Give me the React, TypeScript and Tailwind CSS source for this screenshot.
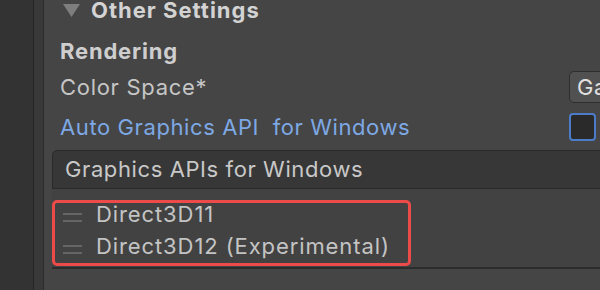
import React from "react";

const apis = ["Direct3D11", "Direct3D12 (Experimental)"];

function DragHandle() {
  return (
    <div className="ml-[11px] mt-[6px] flex w-[19px] shrink-0 flex-col gap-[5px]">
      <span className="h-[2px] bg-[#656565]" />
      <span className="h-[2px] bg-[#656565]" />
    </div>
  );
}

export default function App() {
  return (
    <div className="flex h-[290px] w-[600px] overflow-hidden bg-[#454545] font-['Inter','Noto_Sans',sans-serif] text-[22px] tracking-[0.7px] text-[#c6c6c6]">
      {/* side gutters */}
      <div className="w-[33px] shrink-0 bg-[#333333]" />
      <div className="w-[1px] shrink-0 bg-[#262626]" />
      <div className="w-[9px] shrink-0 bg-[#393939]" />
      <div className="w-[1px] shrink-0 bg-[#2b2b2b]" />

      <div className="flex min-w-0 flex-1 flex-col overflow-hidden">
        {/* foldout header */}
        <div className="flex h-[20px] items-center">
          <svg className="ml-[19px] shrink-0" width="17" height="13" viewBox="0 0 17 13">
            <path d="M0 0 H17 L8.5 13 Z" fill="#7e7e7e" />
          </svg>
          <span className="ml-[11px] text-[22px] font-bold leading-[25px] tracking-[1px] text-[#d3d3d3]">
            Other Settings
          </span>
        </div>

        <div className="mt-[16px] flex h-[31px] items-center pl-[16px]">
          <span className="font-bold leading-[25px] tracking-[0.8px] text-[#cecece]">Rendering</span>
        </div>

        <div className="mt-[4px] flex h-[32px] items-center pl-[16px]">
          <span className="leading-[25px]">Color Space*</span>
          <div className="ml-auto mr-[-19px] flex h-[32px] w-[50px] shrink-0 items-center rounded-[5px] border border-[#2e2e2e] bg-[#515151] pl-[7px] text-[#e0e0e0]">
            <span className="leading-[25px]">Ga</span>
          </div>
        </div>

        <div className="mt-[8px] flex h-[32px] items-center pl-[16px]">
          <span className="whitespace-pre leading-[25px] tracking-[0.6px] text-[#7ea8e4]">Auto Graphics API  for Windows</span>
          <div className="ml-auto mr-[4px] h-[28px] w-[27px] shrink-0 rounded-[4px] border-2 border-[#4a7cc8] bg-[#2a2a2a]" />
        </div>

        {/* reorderable list */}
        <div className="relative ml-[8px] mr-[-20px] mt-[7px]">
          <div className="flex h-[39px] items-center rounded-tl-[5px] border border-[#2a2a2a] bg-[#373737] pl-[12px]">
            <span className="leading-[25px] tracking-[0.6px] text-[#c8c8c8]">Graphics APIs for Windows</span>
          </div>
          <div className="border-b-2 border-[#2c2c2c] bg-[#424242] pb-[5px] pt-[9px]">
            {apis.map((api) => (
              <div key={api} className="flex h-[32px] items-center">
                <DragHandle />
                <span className="ml-[14px] leading-[25px] tracking-[0.9px] text-[#c4c4c4]">{api}</span>
              </div>
            ))}
          </div>
          {/* highlight annotation */}
          <div className="absolute left-0 top-[50px] h-[66px] w-[359px] rounded-[5px] border-[3px] border-[#ed4a4a]" />
        </div>
      </div>
    </div>
  );
}
